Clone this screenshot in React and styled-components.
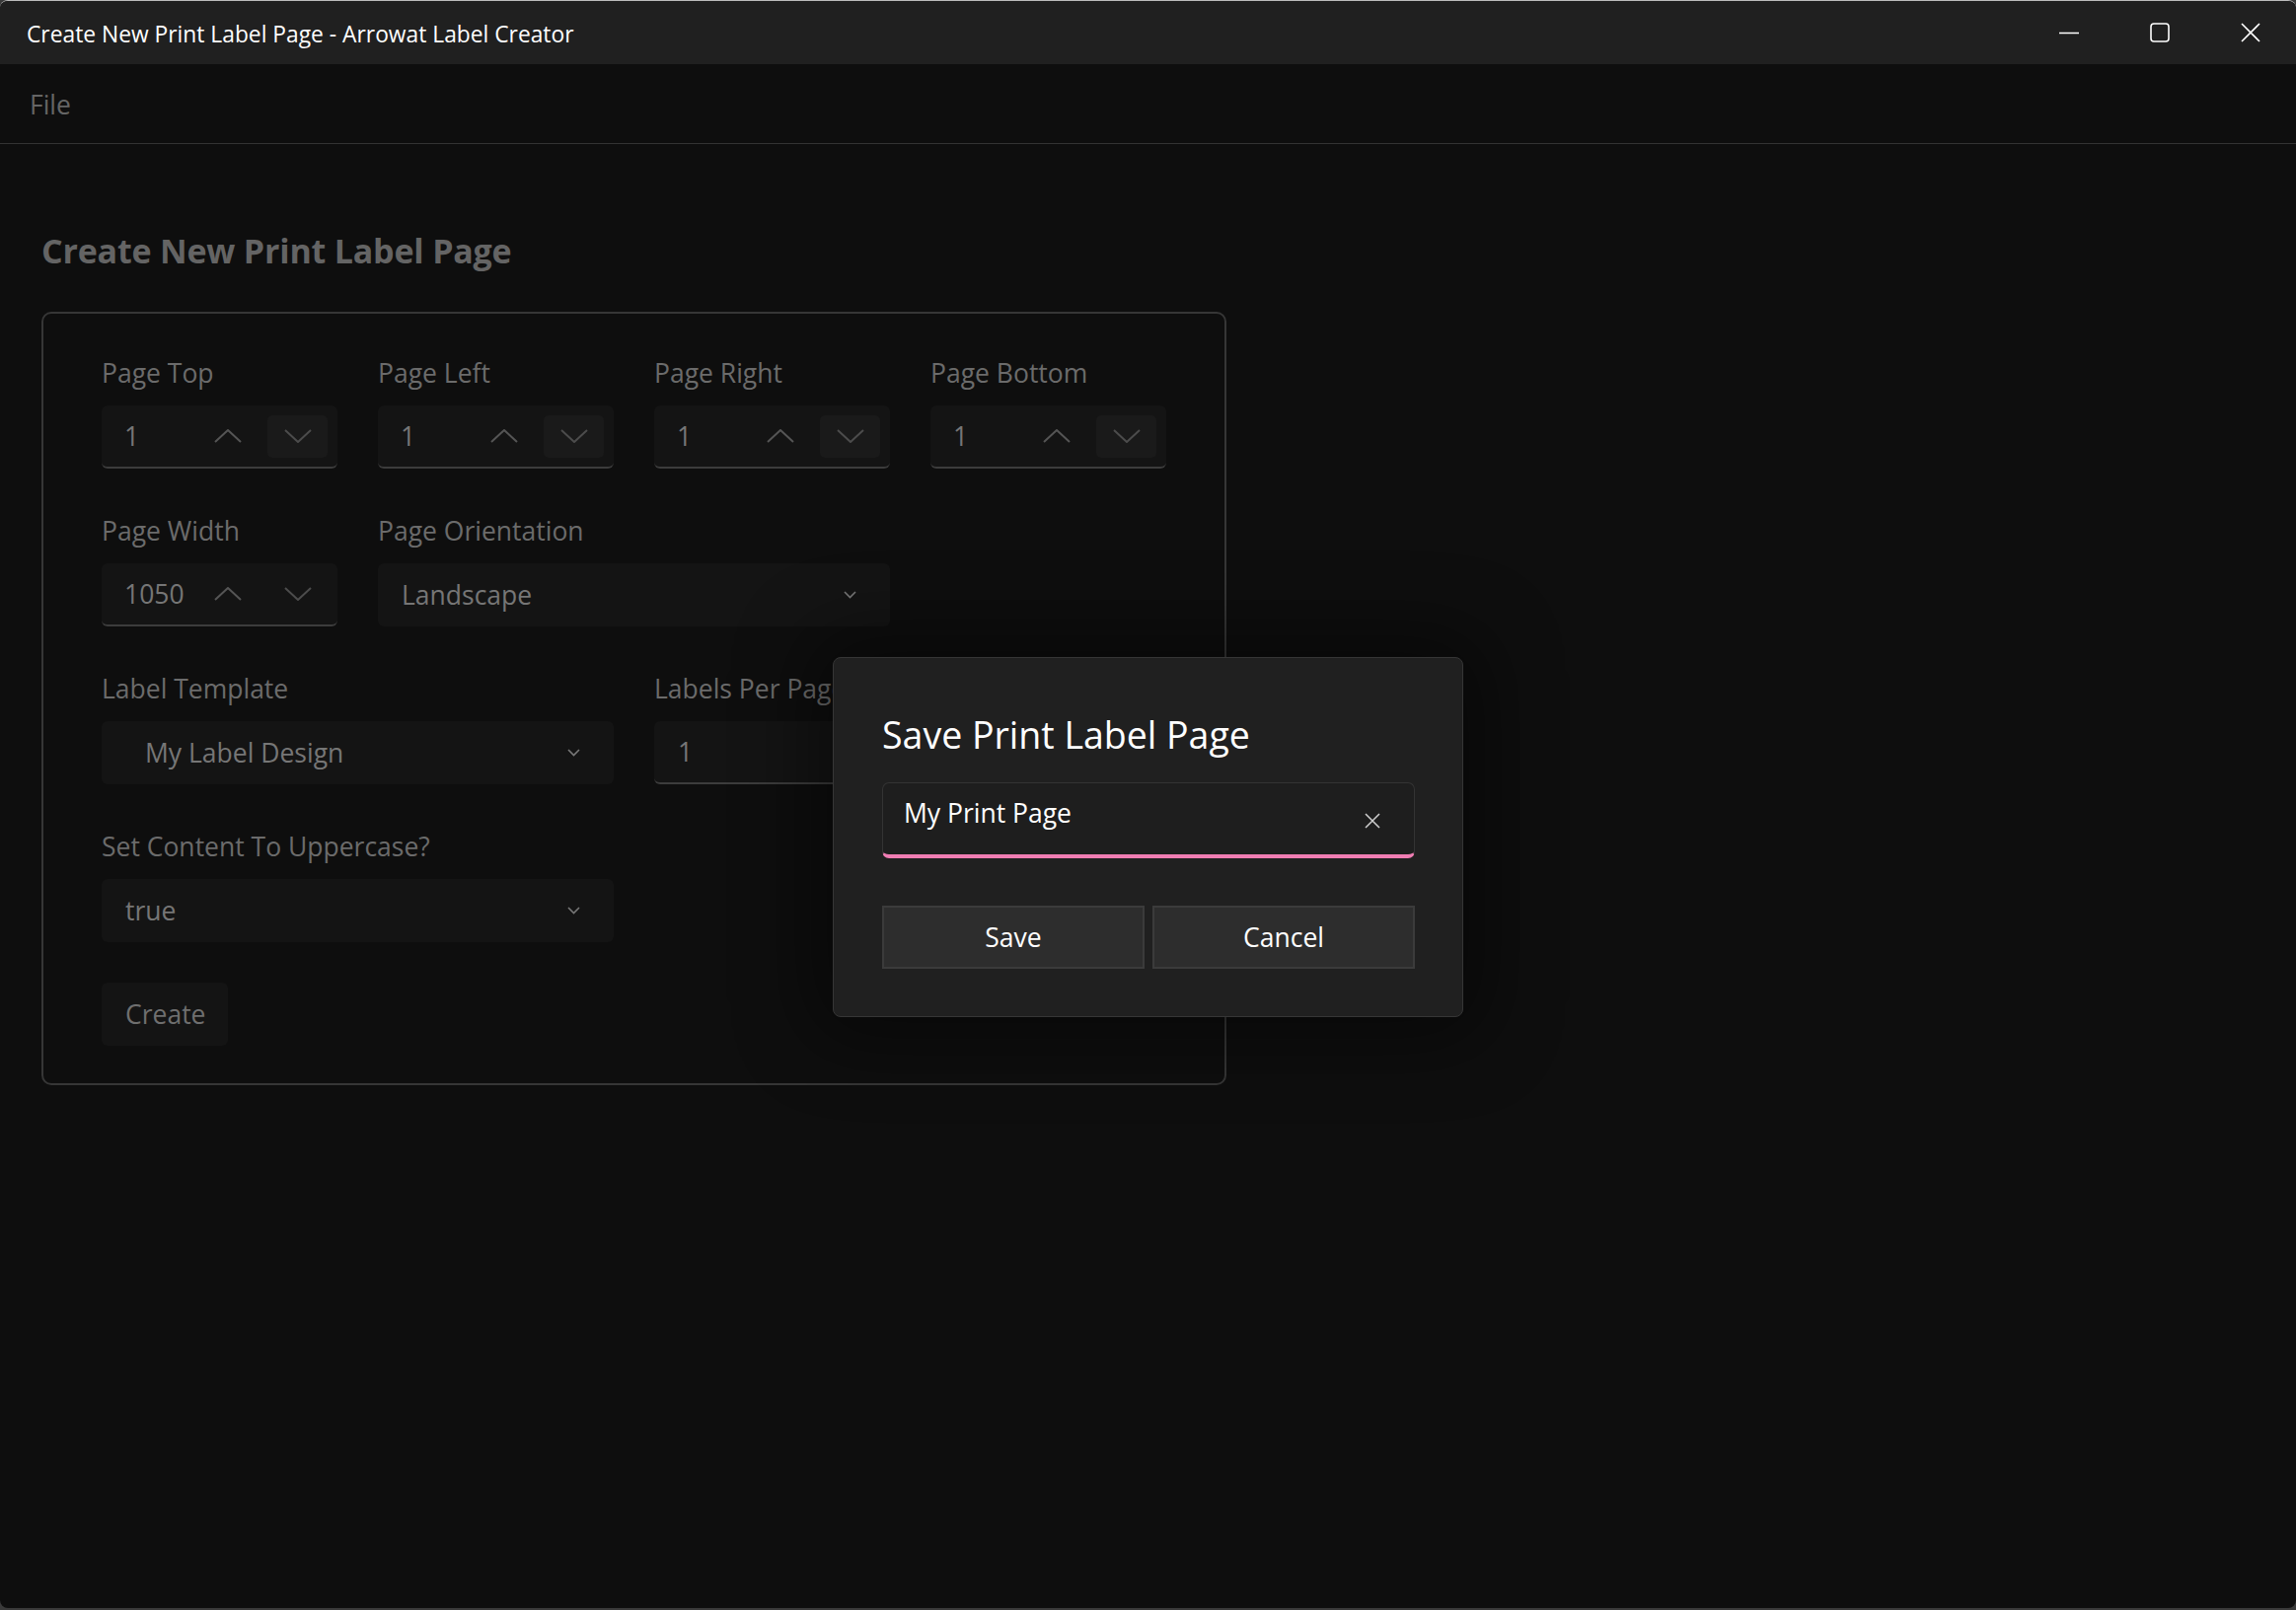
import React from "react";
import styled, { createGlobalStyle } from "styled-components";

const GlobalStyle = createGlobalStyle`
  html, body {
    margin: 0;
    padding: 0;
    background: #3a3a3a;
  }
  body {
    font-family: "Open Sans", "Noto Sans", sans-serif;
  }
  * {
    box-sizing: border-box;
  }
`;

const Window = styled.div`
  position: relative;
  width: 2327px;
  height: 1630px;
  background: #0e0e0e;
  border-top: 1px solid #bdbdbd;
  border-radius: 8px;
  overflow: hidden;
  display: flex;
  flex-direction: column;
`;

const TitleBar = styled.div`
  height: 64px;
  background: #202020;
  display: flex;
  align-items: center;
  justify-content: space-between;
  padding-left: 27px;
`;

const TitleText = styled.div`
  color: #ffffff;
  font-size: 22.8px;
  padding-top: 2px;
`;

const Controls = styled.div`
  display: flex;
  height: 100%;
`;

const ControlButton = styled.div`
  width: 92px;
  height: 100%;
  display: flex;
  align-items: center;
  justify-content: center;
`;

const MenuBar = styled.div`
  height: 81px;
  border-bottom: 1px solid #333333;
  display: flex;
  align-items: center;
  padding-left: 30px;
`;

const MenuItem = styled.div`
  color: #656565;
  font-size: 26.5px;
  padding-top: 2px;
`;

const Content = styled.div`
  flex: 1;
  padding: 84px 0 0 42px;
`;

const Heading = styled.h1`
  margin: 0 0 38px 0;
  color: #646464;
  font-size: 34px;
  font-weight: 700;
  line-height: 48px;
  letter-spacing: -0.2px;
`;

const Card = styled.div`
  width: 1201px;
  height: 784px;
  border: 2px solid #363636;
  border-radius: 10px;
  padding: 41px 59px 0 59px;
  display: grid;
  grid-template-columns: repeat(4, 239px);
  grid-auto-rows: min-content;
  column-gap: 41px;
  row-gap: 44px;
`;

const Field = styled.div`
  display: flex;
  flex-direction: column;
  gap: 14px;
  grid-column: span ${(p) => p.span || 1};
`;

const Label = styled.div`
  color: #6b6b6b;
  font-size: 26.5px;
  line-height: 38px;
  height: 38px;
  white-space: nowrap;
`;

const NumberBox = styled.div`
  height: 64px;
  background: #141414;
  border-radius: 6px;
  border-bottom: 2px solid #3c3c3c;
  display: flex;
  align-items: center;
  padding: 0 10px 0 23px;
`;

const Value = styled.div`
  flex: 1;
  color: #767676;
  font-size: 26.5px;
  padding-left: ${(p) => p.inset || 0}px;
`;

const SpinButton = styled.div`
  width: 61px;
  height: 43px;
  border-radius: 5px;
  margin-left: 10px;
  display: flex;
  align-items: center;
  justify-content: center;
  background: ${(p) => (p.active ? "#1a1a1a" : "transparent")};
`;

const Combo = styled.div`
  height: 64px;
  background: #141414;
  border-radius: 6px;
  display: flex;
  align-items: center;
  padding: 0 34px 0 24px;
`;

const TextField = styled.div`
  height: 64px;
  background: #141414;
  border-radius: 6px;
  border-bottom: 2px solid #3c3c3c;
  display: flex;
  align-items: center;
  padding: 0 24px 0 24px;
`;

const CreateButton = styled.div`
  grid-column: span 1;
  width: 128px;
  height: 64px;
  margin-top: -3px;
  background: #141414;
  border-radius: 6px;
  color: #6f6f6f;
  font-size: 26.5px;
  display: flex;
  align-items: center;
  padding-left: 24px;
`;

const Dialog = styled.div`
  position: absolute;
  left: 844px;
  top: 665px;
  width: 639px;
  height: 365px;
  background: #202020;
  border: 1px solid #363636;
  border-radius: 8px;
  padding: 52px 48px 0 49px;
  box-shadow: 0 0 80px 20px rgba(0, 0, 0, 0.45);
  display: flex;
  flex-direction: column;
`;

const DialogTitle = styled.div`
  color: #ffffff;
  font-size: 37.5px;
  line-height: 52px;
  margin-bottom: 22px;
`;

const NameInput = styled.div`
  height: 77px;
  background: #1e1e1e;
  border: 1px solid #343434;
  border-bottom: 4px solid #ef7db3;
  border-radius: 7px;
  display: flex;
  align-items: center;
  padding: 0 34px 12px 21px;
`;

const NameText = styled.div`
  flex: 1;
  color: #ffffff;
  font-size: 26.5px;
`;

const ClearButton = styled.div`
  display: flex;
  align-items: center;
  padding-top: 16px;
`;

const ButtonRow = styled.div`
  display: grid;
  grid-template-columns: 1fr 1fr;
  gap: 8px;
  margin-top: 48px;
`;

const DialogButton = styled.div`
  height: 64px;
  background: #2d2d2d;
  border: 2px solid #3b3b3b;
  color: #ffffff;
  font-size: 26.5px;
  display: flex;
  align-items: center;
  justify-content: center;
`;

const Chevron = ({ up, size = 28, color = "#555555" }) => (
  <svg width={size} height={size / 2} viewBox="0 0 28 14" fill="none">
    <path
      d={up ? "M1 13 L14 1 L27 13" : "M1 1 L14 13 L27 1"}
      stroke={color}
      strokeWidth="2"
      strokeLinejoin="round"
    />
  </svg>
);

const SmallChevron = () => (
  <svg width="13" height="8" viewBox="0 0 13 8" fill="none">
    <path d="M1 1 L6.5 6.5 L12 1" stroke="#777777" strokeWidth="1.6" />
  </svg>
);

const Spinner = ({ value }) => (
  <NumberBox>
    <Value>{value}</Value>
    <SpinButton>
      <Chevron up />
    </SpinButton>
    <SpinButton active={value === "1"}>
      <Chevron color="#4c4c4c" />
    </SpinButton>
  </NumberBox>
);

const Select = ({ value, inset }) => (
  <Combo>
    <Value inset={inset}>{value}</Value>
    <SmallChevron />
  </Combo>
);

const WinIcon = ({ kind }) => {
  if (kind === "min")
    return (
      <svg width="20" height="20" viewBox="0 0 20 20">
        <path d="M0 10.5 H20" stroke="#fff" strokeWidth="1.6" />
      </svg>
    );
  if (kind === "max")
    return (
      <svg width="20" height="20" viewBox="0 0 20 20" fill="none">
        <rect x="1" y="1" width="18" height="18" rx="3" stroke="#fff" strokeWidth="1.6" />
      </svg>
    );
  return (
    <svg width="20" height="20" viewBox="0 0 20 20">
      <path d="M1 1 L19 19 M19 1 L1 19" stroke="#fff" strokeWidth="1.6" />
    </svg>
  );
};

const App = () => {
  return (
    <>
      <GlobalStyle />
      <Window>
        <TitleBar>
          <TitleText>Create New Print Label Page - Arrowat Label Creator</TitleText>
          <Controls>
            <ControlButton>
              <WinIcon kind="min" />
            </ControlButton>
            <ControlButton>
              <WinIcon kind="max" />
            </ControlButton>
            <ControlButton>
              <WinIcon kind="close" />
            </ControlButton>
          </Controls>
        </TitleBar>
        <MenuBar>
          <MenuItem>File</MenuItem>
        </MenuBar>
        <Content>
          <Heading>Create New Print Label Page</Heading>
          <Card>
            <Field>
              <Label>Page Top</Label>
              <Spinner value="1" />
            </Field>
            <Field>
              <Label>Page Left</Label>
              <Spinner value="1" />
            </Field>
            <Field>
              <Label>Page Right</Label>
              <Spinner value="1" />
            </Field>
            <Field>
              <Label>Page Bottom</Label>
              <Spinner value="1" />
            </Field>

            <Field>
              <Label>Page Width</Label>
              <Spinner value="1050" />
            </Field>
            <Field span={2}>
              <Label>Page Orientation</Label>
              <Select value="Landscape" />
            </Field>
            <div />

            <Field span={2}>
              <Label>Label Template</Label>
              <Select value="My Label Design" inset={20} />
            </Field>
            <Field span={2}>
              <Label>Labels Per Page</Label>
              <TextField>
                <Value>1</Value>
              </TextField>
            </Field>

            <Field span={2}>
              <Label>Set Content To Uppercase?</Label>
              <Select value="true" />
            </Field>
            <div />
            <div />

            <CreateButton>Create</CreateButton>
          </Card>
        </Content>

        <Dialog>
          <DialogTitle>Save Print Label Page</DialogTitle>
          <NameInput>
            <NameText>My Print Page</NameText>
            <ClearButton>
              <svg width="16" height="16" viewBox="0 0 16 16">
                <path d="M1 1 L15 15 M15 1 L1 15" stroke="#cfcfcf" strokeWidth="1.5" />
              </svg>
            </ClearButton>
          </NameInput>
          <ButtonRow>
            <DialogButton>Save</DialogButton>
            <DialogButton>Cancel</DialogButton>
          </ButtonRow>
        </Dialog>
      </Window>
    </>
  );
};

export default App;
